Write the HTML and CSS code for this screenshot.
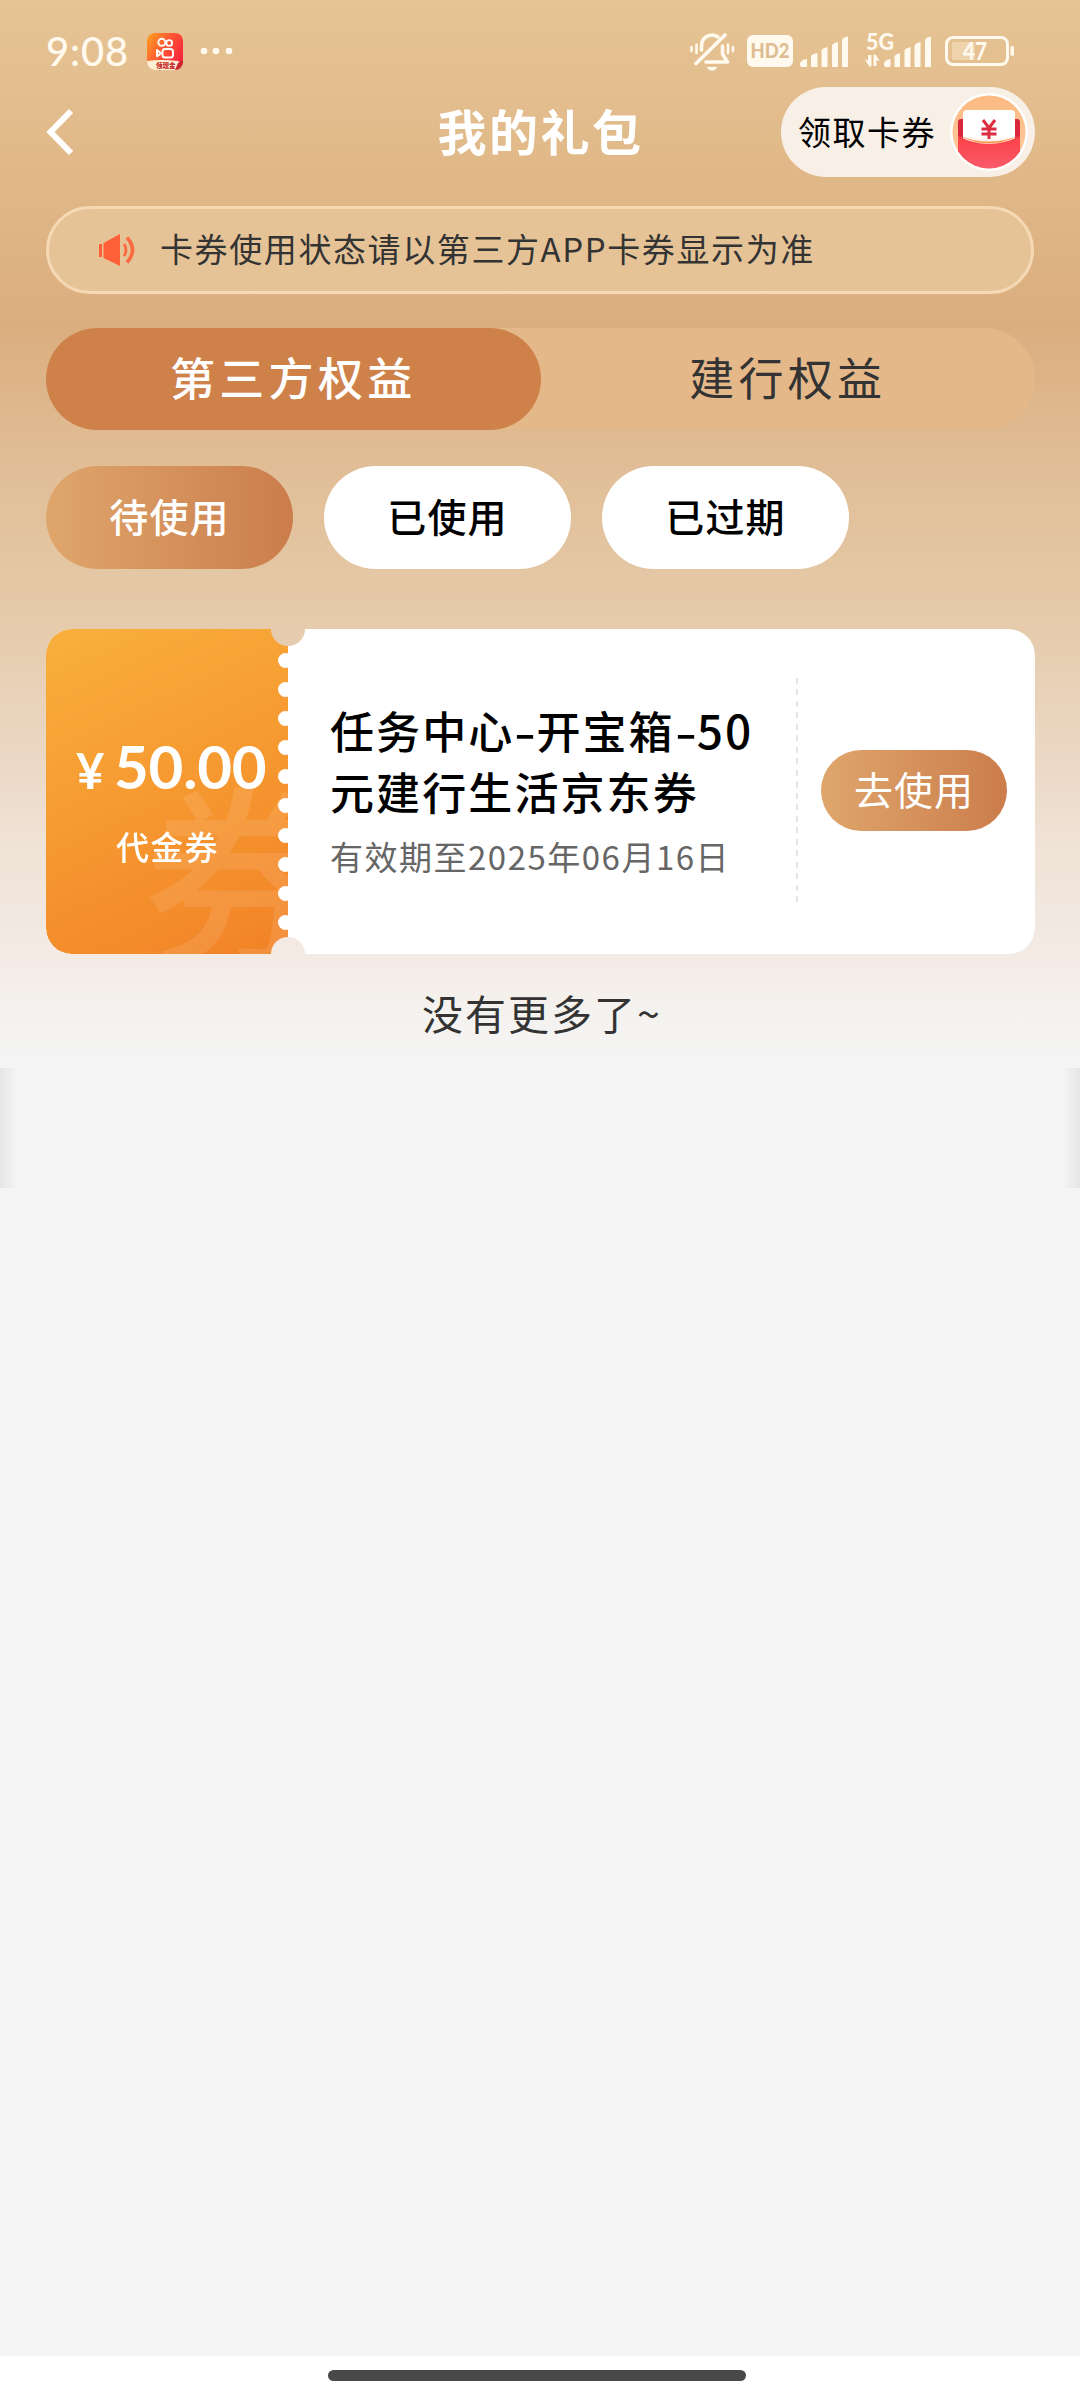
FILE: index.html
```html
<!DOCTYPE html>
<html lang="zh-CN">
<head>
<meta charset="utf-8">
<title>我的礼包</title>
<link rel="stylesheet" href="styles.css">
</head>
<body>
<div class="screen">
  <div class="status">
    <span class="clock">9:08</span>
    <svg class="app-icon" width="36" height="37" viewBox="0 0 36 37">
      <defs>
        <linearGradient id="app" x1="0" y1="0" x2="1" y2="0.6"><stop offset="0" stop-color="#ffa321"/><stop offset="0.5" stop-color="#ff5a30"/><stop offset="1" stop-color="#f9263f"/></linearGradient>
        <clipPath id="appclip"><rect width="36" height="37" rx="8"/></clipPath>
      </defs>
      <g clip-path="url(#appclip)">
        <rect width="36" height="37" fill="url(#app)"/>
        <path d="M0 28Q14 26 31 28L36 31V37H0Z" fill="#fdf0d2"/>
        <path d="M28 37L31 30L36 27V37Z" fill="#c8282c"/>
      </g>
      <g fill="none" stroke="#fff" stroke-width="1.9"><circle cx="14.8" cy="9.3" r="3.5"/><circle cx="22.2" cy="10" r="2.9"/><rect x="15.5" y="16" width="10.5" height="8.5" rx="2.6"/><path d="M10 17V23.4L14 20.2Z" stroke-linejoin="round"/></g>
      <text x="9" y="35" class="app-label">领现金</text>
    </svg>
    <svg class="dots" width="34" height="8" viewBox="0 0 34 8"><circle cx="4" cy="4" r="3.3"/><circle cx="16" cy="4" r="3.3"/><circle cx="29" cy="4" r="3.3"/></svg>
    <svg class="status-icons" width="350" height="60" viewBox="680 20 350 60">
      <g fill="none" stroke="#fff9ee" stroke-width="3.6" stroke-linecap="round" stroke-linejoin="round">
        <path d="M701.500 50V46A10.500 10.500 0 0 1 718 37"/>
        <path d="M722.500 46V54L727.500 62H706"/>
        <path d="M696 63.500L725 35"/>
        <path d="M691.500 47V51M696.500 44.500V53M728 44.500V53M733 47V51" stroke-width="2.600"/>
      </g>
      <path d="M706.500 67H717.500Q712 74.500 706.500 67Z" fill="#fff9ee"/>
      <rect x="747" y="35" width="46" height="32" rx="6" fill="#fff9ee"/>
      <text x="750.500" y="58" class="hd" textLength="39" lengthAdjust="spacingAndGlyphs">HD2</text>
      <g fill="#fff9ee">
        <path d="M800 64Q800 60 807 59V67H802Q800 67 800 65ZM811 56Q812 54 817.500 53V67H811ZM821.500 50Q823 48 827.500 47V67H821.500ZM832 45.500Q833 43 838 42V67H832ZM842 40Q843 37 848 36.500V67H842Z"/>
        <path d="M884 64Q884 60 890.500 59V67H886Q884 67 884 65ZM894.500 56Q896 54 900 53V67H894.500ZM904.500 50Q906 48 910.500 47V67H904.500ZM914.500 45.500Q916 43 920.500 42V67H914.500ZM925 40Q926 37 931 36.500V67H925Z"/>
        <path d="M864.500 59L868 60.500V55H871.500V66.500H869.500ZM873.500 66V54.500H875.500L880 61L876.500 60V66Z"/>
        <rect x="1010.500" y="46" width="3.500" height="10" rx="1.700"/>
      </g>
      <text x="866" y="49.800" class="net" textLength="28" lengthAdjust="spacingAndGlyphs">5G</text>
      <rect x="946.500" y="37.500" width="61" height="27" rx="6.500" fill="none" stroke="#fff9ee" stroke-width="3"/>
      <rect x="952" y="42" width="23" height="18" rx="2" fill="#eed3ad"/>
      <text x="963" y="60" class="battery" textLength="24" lengthAdjust="spacingAndGlyphs">47</text>
    </svg>
  </div>

  <div class="header">
    <svg class="back" width="34" height="50" viewBox="0 0 34 50"><path d="M29 4L8.500 25L29 46" fill="none" stroke="#fff" stroke-width="6"/></svg>
    <h1 class="title">我的礼包</h1>
    <div class="claim">
      <span class="claim-text">领取卡券</span>
      <svg class="claim-icon" width="78" height="78" viewBox="0 0 78 78">
        <defs>
          <clipPath id="disc"><circle cx="39" cy="39" r="36.500"/></clipPath>
          <linearGradient id="disc-bg" x1="0" y1="0" x2="0" y2="1"><stop offset="0" stop-color="#fcb981"/><stop offset="1" stop-color="#fdcd9f"/></linearGradient>
          <linearGradient id="pocket" x1="0" y1="0" x2="0" y2="1"><stop offset="0" stop-color="#fb4046"/><stop offset="1" stop-color="#fb5c70"/></linearGradient>
          <linearGradient id="paper" x1="0" y1="0" x2="0" y2="1"><stop offset="0.700" stop-color="#fff"/><stop offset="1" stop-color="#ffd0cc"/></linearGradient>
        </defs>
        <circle cx="39" cy="39" r="39" fill="#fff"/>
        <g clip-path="url(#disc)">
          <rect width="78" height="78" fill="url(#disc-bg)"/>
          <rect x="8" y="26" width="62" height="31" rx="3" fill="#d9263c"/>
          <rect x="13" y="17" width="52" height="38" rx="4" fill="url(#paper)"/>
          <path d="M8 43Q39 59 70 43V78H8Z" fill="url(#pocket)"/>
          <path d="M10 43Q39 58 68 43Q39 54 10 43Z" fill="#ff9a52"/>
        </g>
        <path d="M33 27L39 35L45 27M39 35V46M31.500 36H46.500M31.500 41H46.500" fill="none" stroke="#dc2d40" stroke-width="3"/>
      </svg>
    </div>
  </div>

  <div class="notice">
    <svg width="40" height="36" viewBox="0 0 40 36">
      <path d="M2 12H5V25H2ZM6.500 11L23 2V34L6.500 26Z" fill="#ff6038"/>
      <path d="M27 12Q31 18 27 24" fill="none" stroke="#f96a40" stroke-width="2.800"/>
      <path d="M30 5.500Q41 18 30 30.500" fill="none" stroke="#f96a40" stroke-width="3.600"/>
    </svg>
    <span>卡券使用状态请以第三方APP卡券显示为准</span>
  </div>

  <div class="tabs">
    <div class="tab tab-active">第三方权益</div>
    <div class="tab">建行权益</div>
  </div>

  <div class="filters">
    <div class="filter filter-active">待使用</div>
    <div class="filter">已使用</div>
    <div class="filter">已过期</div>
  </div>

  <div class="coupon">
    <div class="amount">
      <span class="watermark">券</span>
      <div class="price"><span class="yen">¥</span><span class="value">50.00</span></div>
      <div class="kind">代金券</div>
      <div class="teeth"><i></i><i></i><i></i><i></i><i></i><i></i><i></i><i></i><i></i><i></i></div>
    </div>
    <div class="info">
      <div class="name">任务中心<span class="hyphen">-</span>开宝箱<span class="hyphen">-</span><span class="latin">50</span><br>元建行生活京东券</div>
      <div class="date">有效期至2025年06月16日</div>
    </div>
    <div class="divider"></div>
    <div class="action"><div class="use">去使用</div></div>
  </div>

  <div class="end">没有更多了~</div>
  <div class="edge"></div>
  <div class="navbar"><div class="handle"></div></div>
</div>
</body>
</html>
```
FILE: styles.css
```css
* { box-sizing: border-box; }
body { margin: 0; }

.screen {
  width: 1080px;
  height: 2400px;
  display: flex;
  flex-direction: column;
  overflow: hidden;
  font-family: "Noto Sans CJK SC", sans-serif;
  white-space: nowrap;
  background: linear-gradient(#e6c495 0, #e0b787 190px, #dbae7f 325px, #e0bc94 450px, #e5caa9 610px, #ead5bf 730px, #f0e3d7 850px, #f4ebe5 960px, #f4f2ef 1010px, #f5f5f5 1068px, #f5f5f5 100%);
}

.status {
  height: 87px;
  display: flex;
  align-items: center;
  padding: 15px 50px 0 46px;
  flex: none;
}
.clock { width: 101px; font: 500 40px/60px Lato, sans-serif; letter-spacing: 0.800px; color: #fff9ee; }
.app-label { font-size: 6.500px; font-weight: 900; fill: #c8282c; }
.dots { margin-left: 17px; fill: #fff9ee; }
.status-icons { margin-left: auto; margin-top: -2px; }
.hd, .net, .battery { font-family: Lato, sans-serif; font-weight: 900; }
.hd { font-size: 20px; fill: #dfbd92; }
.net { font-size: 22px; fill: #fff9ee; }
.battery { font-size: 24px; fill: #fff9ee; }

.header {
  height: 90px;
  display: grid;
  grid-template-columns: 254px 1fr 254px;
  align-items: center;
  padding: 0 45px 0 44px;
  flex: none;
}
.back { margin-left: -2px; }
.title { margin: -5px 0 0 2px; text-align: center; font-size: 49px; line-height: 90px; font-weight: 700; letter-spacing: 2.500px; color: #fff; }
.claim {
  height: 90px;
  display: flex;
  align-items: center;
  justify-content: space-between;
  padding: 0 7px 0 17px;
  border-radius: 45px;
  background: #f8f0e7;
}
.claim-text { margin-top: -2px; font-size: 33px; letter-spacing: 1.500px; color: #000; }

.notice {
  height: 88px;
  margin: 29px 46px 0;
  padding-left: 48px;
  display: flex;
  align-items: center;
  gap: 23px;
  flex: none;
  border: 3px solid #f5d9b5;
  border-radius: 44px;
  background: #e6c397;
  font-size: 33px;
  letter-spacing: 1.600px;
  color: #333;
}
.notice span { margin-top: -5px; }

.tabs {
  height: 102px;
  margin: 34px 45px 0 46px;
  display: grid;
  grid-template-columns: 1fr 1fr;
  flex: none;
  border-radius: 51px;
  background: #e5b88a;
}
.tab { border-radius: 51px; text-align: center; font-size: 45px; line-height: 97px; letter-spacing: 4.300px; color: #333; }
.tab-active { background: #cf814a; color: #fff; font-weight: 500; }

.filters { display: flex; gap: 31px; margin: 36px 46px 0; flex: none; }
.filter {
  width: 247px;
  height: 103px;
  border-radius: 52px;
  background: #fff;
  color: #000;
  text-align: center;
  font-size: 39px;
  line-height: 98px;
  font-weight: 500;
  letter-spacing: 1.200px;
}
.filter-active { background: linear-gradient(90deg, #dfa66c, #cb7d4b); color: #fff; }

.coupon {
  height: 325px;
  margin: 60px 45px 0 46px;
  display: flex;
  align-items: center;
  flex: none;
  border-radius: 26px;
  background: #fff;
  mask: radial-gradient(circle at 242px 0, transparent 16.500px, #000 17.500px), radial-gradient(circle at 242px 325px, transparent 16.500px, #000 17.500px);
  mask-composite: intersect;
}
.amount {
  position: relative;
  width: 242px;
  height: 325px;
  padding-top: 103px;
  overflow: hidden;
  border-radius: 26px 0 0 26px;
  background: linear-gradient(155deg, #f9b03c, #f5942e 60%, #f28227);
  color: #fff;
}
.price { display: flex; align-items: baseline; position: relative; padding-left: 30px; height: 68px; font-family: Lato, sans-serif; font-weight: 700; line-height: 68px; }
.yen { width: 38px; font-size: 49px; }
.value { font-size: 60px; letter-spacing: -0.200px; }
.kind { position: relative; padding-left: 70px; margin-top: 21px; font-size: 33px; line-height: 50px; font-weight: 500; letter-spacing: 1.300px; }
.watermark { position: absolute; left: 97px; top: 142px; font-size: 193px; line-height: 193px; font-weight: 500; color: rgba(255, 255, 255, 0.1); }
.teeth { position: absolute; right: -5px; top: 24px; display: flex; flex-direction: column; gap: 14.100px; }
.teeth i { width: 15px; height: 15px; border-radius: 7.500px; background: #fff; }

.info { width: 508px; padding-left: 42px; margin-top: -3px; }
.name { font-size: 44px; line-height: 61px; font-weight: 500; letter-spacing: 2.100px; color: #000; }
.date { margin-top: 9px; font-size: 33px; line-height: 50px; letter-spacing: 1.500px; color: #666; }
.hyphen { display: inline-block; width: 22px; transform: scaleX(1.400); transform-origin: 0 50%; }
.latin { font-size: 46px; letter-spacing: 2px; line-height: 1; }
.divider { width: 2px; height: 228px; background: repeating-linear-gradient(#e4e4e4 0 6px, transparent 6px 11.500px); }
.action { flex: 1; padding-left: 23px; margin-top: -2px; }
.use {
  width: 186px;
  height: 81px;
  border-radius: 41px;
  background: linear-gradient(90deg, #dfa66c, #cb7d4b);
  color: #fff;
  text-align: center;
  font-size: 39px;
  line-height: 76px;
  letter-spacing: 1px;
}

.end { margin-top: 28px; padding-left: 4px; height: 60px; line-height: 60px; text-align: center; font-size: 41px; letter-spacing: 2px; color: #333; flex: none; }
.edge {
  height: 120px;
  margin-top: 26px;
  flex: none;
  background: linear-gradient(90deg, #e6e6e6, #f5f5f5 18px, #f5f5f5 1062px, #e6e6e6);
}
.navbar { margin-top: auto; height: 44px; padding: 14px 334px 0 328px; background: #fff; flex: none; }
.handle { height: 11px; border-radius: 6px; background: #484848; }
```
